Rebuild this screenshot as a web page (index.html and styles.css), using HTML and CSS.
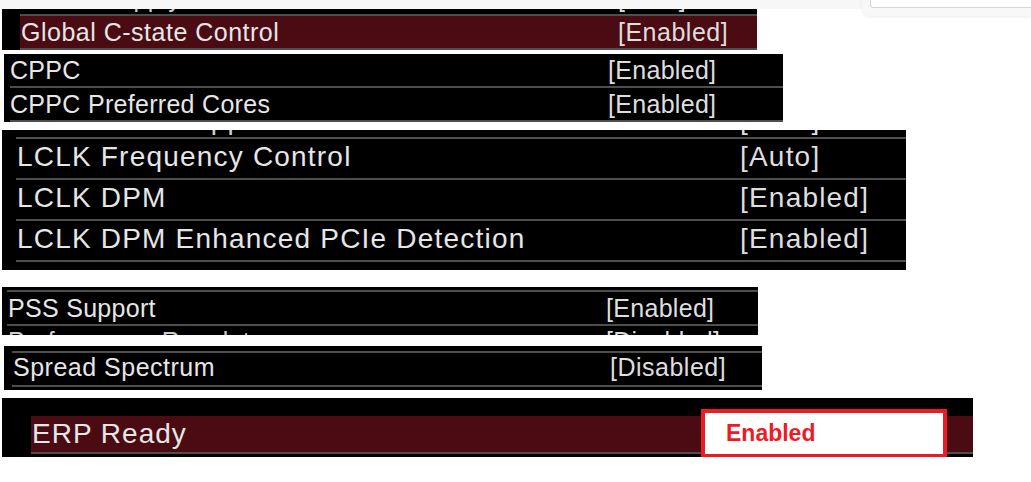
FILE: index.html
```html
<!DOCTYPE html>
<html lang="en">
<head>
    <meta charset="UTF-8">
    <meta name="viewport" content="width=device-width, initial-scale=1.0">
    <title>BIOS settings</title>
    <link rel="stylesheet" href="styles.css">
</head>
<body>
    <div class="topbar"></div>
    <div class="popup"><div class="popup-box"></div></div>

    <main class="collage">
        <!-- Global C-state -->
        <section class="shot shot-cstate">
            <div class="cut">
                <div class="row"><span class="name">Power Supply Idle Control</span><span class="val">[Auto]</span></div>
            </div>
            <div class="list lined">
                <div class="row sel"><span class="name">Global C-state Control</span><span class="val">[Enabled]</span></div>
            </div>
        </section>

        <!-- CPPC -->
        <section class="shot shot-cppc">
            <div class="list">
                <div class="row"><span class="name">CPPC</span><span class="val">[Enabled]</span></div>
                <div class="row"><span class="name">CPPC Preferred Cores</span><span class="val">[Enabled]</span></div>
            </div>
        </section>

        <!-- LCLK -->
        <section class="shot shot-lclk">
            <div class="cut">
                <div class="row"><span class="name">NBIO DPM Support</span><span class="val">[Auto]</span></div>
            </div>
            <div class="list lined">
                <div class="row"><span class="name">LCLK Frequency Control</span><span class="val">[Auto]</span></div>
                <div class="row"><span class="name">LCLK DPM</span><span class="val">[Enabled]</span></div>
                <div class="row"><span class="name">LCLK DPM Enhanced PCIe Detection</span><span class="val">[Enabled]</span></div>
            </div>
        </section>

        <!-- PSS -->
        <section class="shot shot-pss">
            <div class="list lined">
                <div class="row"><span class="name">PSS Support</span><span class="val">[Enabled]</span></div>
            </div>
            <div class="cut tail">
                <div class="row"><span class="name">Performance Regulator</span><span class="val">[Disabled]</span></div>
            </div>
        </section>

        <!-- Spread Spectrum -->
        <section class="shot shot-spread">
            <div class="list lined">
                <div class="row"><span class="name">Spread Spectrum</span><span class="val">[Disabled]</span></div>
            </div>
        </section>

        <!-- ERP -->
        <section class="shot shot-erp">
            <div class="list">
                <div class="row sel"><span class="name">ERP Ready</span></div>
            </div>
            <div class="callout">Enabled</div>
        </section>
    </main>
</body>
</html>
```

FILE: styles.css
```css
body {
    margin: 0;
    background: #fff;
    font-family: "Liberation Sans", Arial, sans-serif;
    overflow: hidden;
}
.topbar {
    height: 9px;
    background: #f7f7f7;
}
/* browser popup peeking in at top right */
.popup {
    position: absolute;
    top: 0;
    right: 0;
    width: 169px;
    height: 16px;
    background: #f8f8f8;
    border-bottom-left-radius: 8px;
    box-shadow: 0 1px 3px rgba(0, 0, 0, 0.08);
}
.popup-box {
    margin-left: 8px;
    height: 7px;
    border: 1px solid #d6d6d6;
    border-top: none;
    border-right: none;
    border-bottom-left-radius: 4px;
    background: #fff;
}

.collage {
    display: flex;
    flex-direction: column;
    align-items: flex-start;
}
.shot {
    position: relative;
    background: #000;
    color: #e6e6e6;
    font-size: 25px;
    letter-spacing: 0.3px;
    --indent: 6px;
    --name-w: 598px;
    --row-h: 32px;
    --lh: 32px;
}
.list {
    margin-left: var(--indent);
}
.list.lined {
    border-top: 2px solid #4e4e4e;
}
.row {
    display: flex;
    height: var(--row-h);
    line-height: var(--lh);
    border-bottom: 2px solid #4e4e4e;
    white-space: nowrap;
}
.row .name {
    width: var(--name-w);
    padding-left: 1px;
    flex: none;
}
.row .val {
    color: #dedede;
}
.row.sel {
    background: #4a0b12;
}
/* rows cut by the screenshot edge */
.cut {
    overflow: hidden;
    margin-left: var(--indent);
}
.cut .row {
    border-bottom: none;
    color: #cfcfcf;
}

.shot-cstate {
    margin-left: 2px;
    width: 755px;
    --indent: 18px;
    --name-w: 597px;
    letter-spacing: 0.5px;
}
.shot-cstate .cut { height: 5px; }
.shot-cstate .cut .row { margin-top: -27px; }

.shot-cppc {
    margin-top: 4px;
    margin-left: 4px;
    width: 779px;
    --indent: 6px;
    --name-w: 598px;
}
.shot-cppc .name { padding-left: 0; }

.shot-lclk {
    margin-top: 8px;
    margin-left: 2px;
    width: 904px;
    padding-bottom: 8px;
    font-size: 28px;
    letter-spacing: 1.2px;
    --indent: 14px;
    --name-w: 723px;
    --row-h: 39px;
    --lh: 35px;
}
.shot-lclk .cut { height: 7px; }
.shot-lclk .cut .row { margin-top: -28px; }

.shot-pss {
    margin-top: 17px;
    margin-left: 2px;
    width: 756px;
    padding-top: 3px;
    --indent: 5px;
    --name-w: 598px;
}
.shot-pss .tail { height: 9px; }
.shot-pss .tail .row { margin-top: -1px; }

.shot-spread {
    margin-top: 11px;
    margin-left: 4px;
    width: 758px;
    padding-top: 5px;
    padding-bottom: 3px;
    --indent: 8px;
    --name-w: 597px;
    --lh: 29px;
    letter-spacing: 0.5px;
}

.shot-erp {
    margin-top: 8px;
    margin-left: 2px;
    width: 971px;
    padding-top: 18px;
    padding-bottom: 3px;
    font-size: 28px;
    letter-spacing: 1px;
    --indent: 29px;
    --row-h: 36px;
    --lh: 35px;
}
.callout {
    position: absolute;
    left: 699px;
    top: 11px;
    width: 246px;
    height: 49px;
    box-sizing: border-box;
    border: 4px solid #ed1c24;
    background: #fff;
    color: #ed1c24;
    font-weight: bold;
    font-size: 23px;
    letter-spacing: 0;
    line-height: 41px;
    padding-left: 21px;
}
```
